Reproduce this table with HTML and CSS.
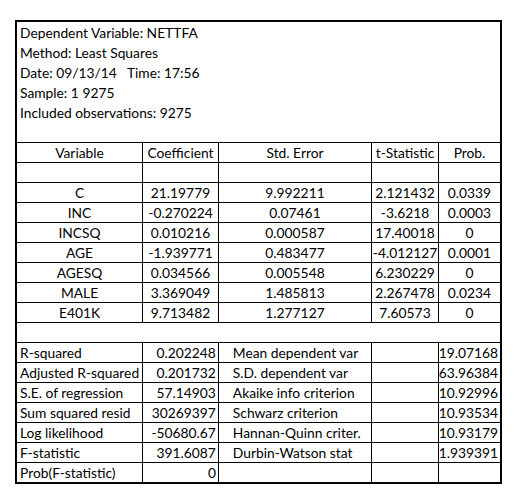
FILE: index.html
```html
<html>

<head>
	<link rel="stylesheet" href="styles.css">
</head>

<body>
	<div id="output">
		<div class="info">
			<div class="line">Dependent Variable: NETTFA</div>
			<div class="line">Method: Least Squares</div>
			<div class="line">Date: 09/13/14&nbsp;&nbsp; Time: 17:56</div>
			<div class="line">Sample: 1 9275</div>
			<div class="line">Included observations: 9275</div>
			<div class="line"></div>
		</div>
		<div class="grid coefs">
			<div class="row">
				<div class="cell">Variable</div>
				<div class="cell">Coefficient</div>
				<div class="cell">Std. Error</div>
				<div class="cell">t-Statistic</div>
				<div class="cell">Prob.</div>
			</div>
			<div class="row">
				<div class="cell"></div>
				<div class="cell"></div>
				<div class="cell"></div>
				<div class="cell"></div>
				<div class="cell"></div>
			</div>
			<div class="row">
				<div class="cell">C</div>
				<div class="cell">21.19779</div>
				<div class="cell">9.992211</div>
				<div class="cell">2.121432</div>
				<div class="cell">0.0339</div>
			</div>
			<div class="row">
				<div class="cell">INC</div>
				<div class="cell">-0.270224</div>
				<div class="cell">0.07461</div>
				<div class="cell">-3.6218</div>
				<div class="cell">0.0003</div>
			</div>
			<div class="row">
				<div class="cell">INCSQ</div>
				<div class="cell">0.010216</div>
				<div class="cell">0.000587</div>
				<div class="cell">17.40018</div>
				<div class="cell">0</div>
			</div>
			<div class="row">
				<div class="cell">AGE</div>
				<div class="cell">-1.939771</div>
				<div class="cell">0.483477</div>
				<div class="cell">-4.012127</div>
				<div class="cell">0.0001</div>
			</div>
			<div class="row">
				<div class="cell">AGESQ</div>
				<div class="cell">0.034566</div>
				<div class="cell">0.005548</div>
				<div class="cell">6.230229</div>
				<div class="cell">0</div>
			</div>
			<div class="row">
				<div class="cell">MALE</div>
				<div class="cell">3.369049</div>
				<div class="cell">1.485813</div>
				<div class="cell">2.267478</div>
				<div class="cell">0.0234</div>
			</div>
			<div class="row">
				<div class="cell">E401K</div>
				<div class="cell">9.713482</div>
				<div class="cell">1.277127</div>
				<div class="cell">7.60573</div>
				<div class="cell">0</div>
			</div>
			<div class="row spacer"></div>
		</div>
		<div class="grid stats">
			<div class="row">
				<div class="cell">R-squared</div>
				<div class="cell">0.202248</div>
				<div class="cell">Mean dependent var</div>
				<div class="cell"></div>
				<div class="cell">19.07168</div>
			</div>
			<div class="row">
				<div class="cell">Adjusted R-squared</div>
				<div class="cell">0.201732</div>
				<div class="cell">S.D. dependent var</div>
				<div class="cell"></div>
				<div class="cell">63.96384</div>
			</div>
			<div class="row">
				<div class="cell">S.E. of regression</div>
				<div class="cell">57.14903</div>
				<div class="cell">Akaike info criterion</div>
				<div class="cell"></div>
				<div class="cell">10.92996</div>
			</div>
			<div class="row">
				<div class="cell">Sum squared resid</div>
				<div class="cell">30269397</div>
				<div class="cell">Schwarz criterion</div>
				<div class="cell"></div>
				<div class="cell">10.93534</div>
			</div>
			<div class="row">
				<div class="cell">Log likelihood</div>
				<div class="cell">-50680.67</div>
				<div class="cell">Hannan-Quinn criter.</div>
				<div class="cell"></div>
				<div class="cell">10.93179</div>
			</div>
			<div class="row">
				<div class="cell">F-statistic</div>
				<div class="cell">391.6087</div>
				<div class="cell">Durbin-Watson stat</div>
				<div class="cell"></div>
				<div class="cell">1.939391</div>
			</div>
			<div class="row">
				<div class="cell">Prob(F-statistic)</div>
				<div class="cell">0</div>
				<div class="cell"></div>
				<div class="cell"></div>
				<div class="cell"></div>
			</div>
		</div>
	</div>
</body>

</html>
```

FILE: styles.css
```css
body {
	margin: 0;
	background: #fff;
	font-family: Lato, "Liberation Sans", sans-serif;
	font-size: 13.8px;
	color: #000;
}

#output {
	width: 483px;
	margin: 20px 0 0 15px;
	border: 2px solid #000;
}

.info .line {
	height: 20px;
	line-height: 21px;
	padding-left: 3px;
	white-space: nowrap;
}

.grid .row {
	display: flex;
	height: 20px;
	border-top: 1px solid #000;
	box-sizing: border-box;
}

.grid .cell {
	box-sizing: border-box;
	height: 19px;
	line-height: 20px;
	white-space: nowrap;
	border-left: 1px solid #000;
}

.grid .cell:nth-child(1) {
	width: 125px;
	border-left: none;
}

.grid .cell:nth-child(2) {
	width: 76px;
}

.grid .cell:nth-child(3) {
	width: 153px;
}

.grid .cell:nth-child(4) {
	width: 67px;
}

.grid .cell:nth-child(5) {
	flex: 1;
}

.coefs .cell {
	text-align: center;
}

.stats .cell:nth-child(1) {
	padding-left: 3px;
}

.stats .cell:nth-child(2),
.stats .cell:nth-child(5) {
	text-align: right;
	padding-right: 2px;
}

.stats .cell:nth-child(3) {
	padding-left: 14px;
}
```
